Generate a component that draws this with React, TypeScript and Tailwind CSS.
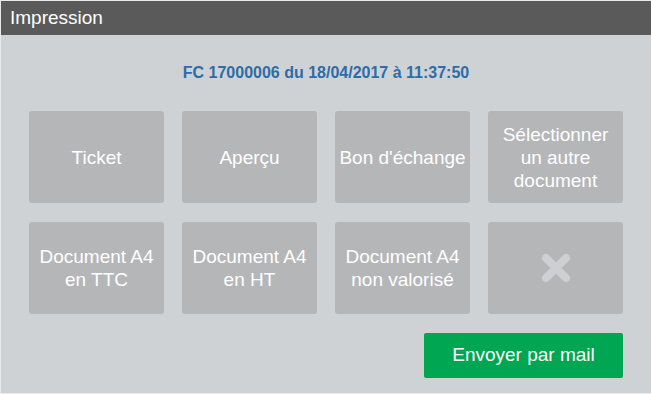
const ACTIONS = [
  "Ticket",
  "Aperçu",
  "Bon d'échange",
  "Sélectionner\nun autre\ndocument",
  "Document A4\nen TTC",
  "Document A4\nen HT",
  "Document A4\nnon valorisé",
];

function CloseMark() {
  return (
    <svg viewBox="0 0 30 30" className="h-[30px] w-[30px]" aria-hidden>
      <path
        d="M5 5 L25 25 M25 5 L5 25"
        stroke="#cdcfd2"
        strokeWidth={8}
        strokeLinecap="round"
        fill="none"
      />
    </svg>
  );
}

export default function App() {
  return (
    <div
      className="flex h-[394px] w-[651px] flex-col border-y border-l border-[#e8e9ea] bg-[#cfd2d5]"
      style={{ fontFamily: '"Liberation Sans", Arial, sans-serif' }}
    >
      <header className="flex h-[34px] shrink-0 items-center bg-[#5a5a5a] pl-[9px] text-[19px] text-white">
        Impression
      </header>

      <div className="flex flex-1 flex-col px-[28px] pt-[28px]">
        <h2 className="text-center text-[16px] font-bold leading-[20px] text-[#2d6ca5]">
          FC 17000006 du 18/04/2017 à 11:37:50
        </h2>

        <div className="mt-[28px] grid grid-cols-4 gap-x-[18px] gap-y-[19px]">
          {ACTIONS.map((label) => (
            <button
              key={label}
              type="button"
              className="flex h-[92px] items-center justify-center whitespace-pre-line rounded-[3px] bg-[#b5b6b8] px-0 text-center text-[19px] leading-[23px] text-white"
            >
              {label}
            </button>
          ))}
          <button
            type="button"
            className="flex h-[92px] items-center justify-center rounded-[3px] bg-[#b5b6b8]"
          >
            <CloseMark />
          </button>
        </div>

        <div className="mt-[19px] flex justify-end">
          <button
            type="button"
            className="h-[45px] w-[199px] rounded-[2px] bg-[#00a651] text-[19px] text-white"
          >
            Envoyer par mail
          </button>
        </div>
      </div>
    </div>
  );
}
